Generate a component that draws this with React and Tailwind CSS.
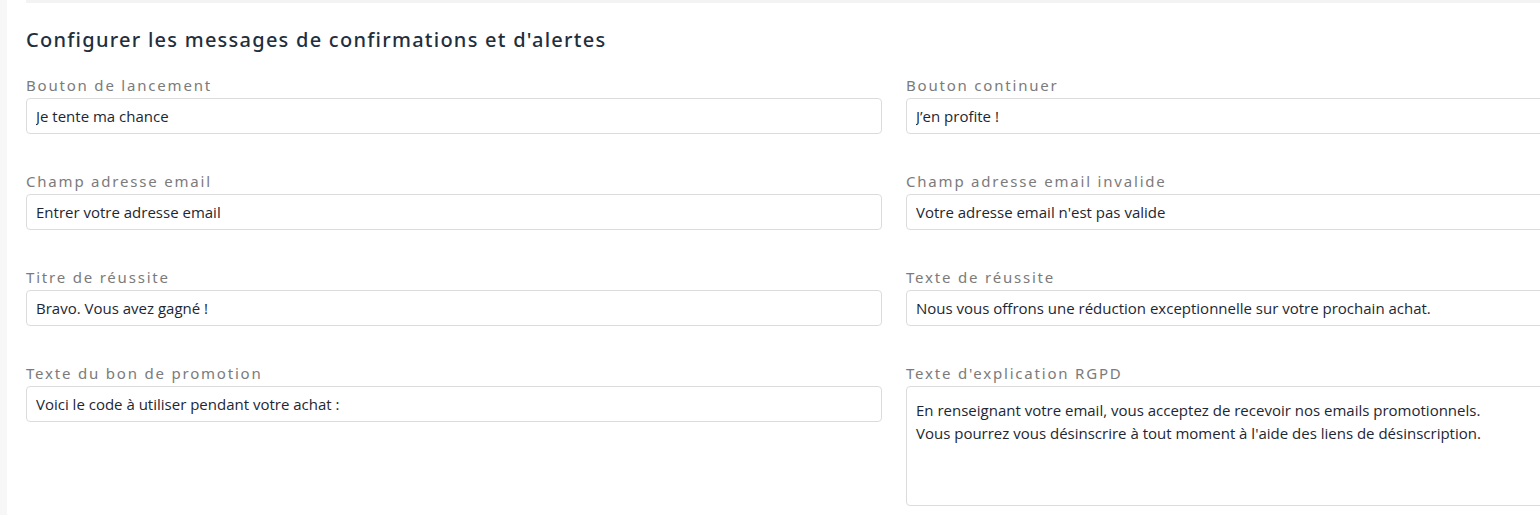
const fields = [
  { label: "Bouton de lancement", value: "Je tente ma chance" },
  { label: "Bouton continuer", value: "J’en profite !" },
  { label: "Champ adresse email", value: "Entrer votre adresse email" },
  { label: "Champ adresse email invalide", value: "Votre adresse email n'est pas valide" },
  { label: "Titre de réussite", value: "Bravo. Vous avez gagné !" },
  { label: "Texte de réussite", value: "Nous vous offrons une réduction exceptionnelle sur votre prochain achat." },
  { label: "Texte du bon de promotion", value: "Voici le code à utiliser pendant votre achat :" },
];

const rgpd =
  "En renseignant votre email, vous acceptez de recevoir nos emails promotionnels.\nVous pourrez vous désinscrire à tout moment à l'aide des liens de désinscription.";

const Field = ({ label, children }) => (
  <div className="flex flex-col">
    <label className="h-[20px] text-[15px] leading-[14px] tracking-[1.8px] text-[#7b7b7b] font-['Noto_Sans',sans-serif]">
      {label}
    </label>
    {children}
  </div>
);

const inputCls =
  "w-full rounded-[4px] border border-[#dcdcdc] bg-white px-[9px] text-[15px] text-[#1d2733] font-['Open_Sans',sans-serif] outline-none";

export default function App() {
  return (
    <div className="flex h-[515px] w-[1540px] overflow-hidden bg-white">
      <div className="w-[7px] shrink-0 bg-[#f7f7f7]" />
      <div className="flex-1 pl-[19px]">
        <div className="h-[3px] bg-[#f3f3f3]" />
        <h2 className="mt-[25px] text-[20px] leading-[24px] tracking-[1.25px] text-[#1f2f3d] font-['Noto_Sans',sans-serif] font-medium">
          Configurer les messages de confirmations et d'alertes
        </h2>
        <div className="mt-[26px] grid grid-cols-[856px_856px] gap-x-[24px] gap-y-[40px]">
          {fields.map((f) => (
            <Field key={f.label} label={f.label}>
              <input readOnly value={f.value} className={`${inputCls} h-[36px]`} />
            </Field>
          ))}
          <Field label="Texte d'explication RGPD">
            <textarea
              readOnly
              value={rgpd}
              className={`${inputCls} h-[120px] resize-none pt-[12px] leading-[23px]`}
            />
          </Field>
        </div>
      </div>
    </div>
  );
}
